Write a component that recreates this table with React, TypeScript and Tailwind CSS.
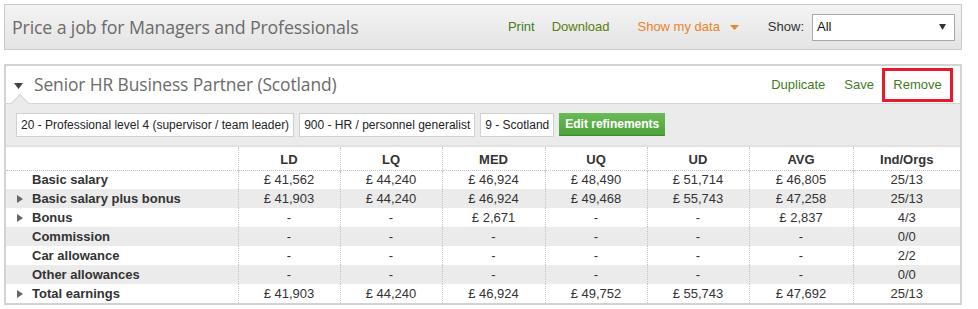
import React from "react";

type Row = {
  label: string;
  expandable: boolean;
  values: string[];
  count: string;
};

const rows: Row[] = [
  { label: "Basic salary", expandable: false, values: ["£ 41,562", "£ 44,240", "£ 46,924", "£ 48,490", "£ 51,714", "£ 46,805"], count: "25/13" },
  { label: "Basic salary plus bonus", expandable: true, values: ["£ 41,903", "£ 44,240", "£ 46,924", "£ 49,468", "£ 55,743", "£ 47,258"], count: "25/13" },
  { label: "Bonus", expandable: true, values: ["-", "-", "£ 2,671", "-", "-", "£ 2,837"], count: "4/3" },
  { label: "Commission", expandable: false, values: ["-", "-", "-", "-", "-", "-"], count: "0/0" },
  { label: "Car allowance", expandable: false, values: ["-", "-", "-", "-", "-", "-"], count: "2/2" },
  { label: "Other allowances", expandable: false, values: ["-", "-", "-", "-", "-", "-"], count: "0/0" },
  { label: "Total earnings", expandable: true, values: ["£ 41,903", "£ 44,240", "£ 46,924", "£ 49,752", "£ 55,743", "£ 47,692"], count: "25/13" },
];

const columns = [
  { name: "LD", width: "w-[102px]" },
  { name: "LQ", width: "w-[102px]" },
  { name: "MED", width: "w-[103px]" },
  { name: "UQ", width: "w-[102px]" },
  { name: "UD", width: "w-[102px]" },
  { name: "AVG", width: "w-[104px]" },
];

const refinements = [
  "20 - Professional level 4 (supervisor / team leader)",
  "900 - HR / personnel generalist",
  "9 - Scotland",
];

const RowArrow = () => (
  <svg width="6" height="8" viewBox="0 0 6 8" className="inline-block">
    <path d="M0 0 L6 4 L0 8 Z" fill="#666" />
  </svg>
);

export default function App() {
  return (
    <div className="w-[978px] h-[309px] bg-white pt-1 pl-1 font-['Liberation_Sans',Arial,sans-serif] text-[13px] text-[#333]">
      {/* Page header */}
      <div className="w-[958px] h-[46px] border border-[#c9c9c9] bg-gradient-to-b from-[#f3f3f3] to-[#e4e4e4] flex items-center pl-[7px] pr-[6px]">
        <h1 className="font-['Open_Sans',sans-serif] text-[17.8px] text-[#6b6b6b] tracking-[-0.15px] flex-1">
          Price a job for Managers and Professionals
        </h1>
        <a className="text-[#3f7d1f] mr-[17px]">Print</a>
        <a className="text-[#5a7d12] mr-[28px]">Download</a>
        <a className="text-[#e8842c] flex items-center mr-[29px]">
          Show my data
          <svg width="9" height="6" viewBox="0 0 9 6" className="ml-[10px] mt-[1px]">
            <path d="M0 0 H9 L4.5 5 Z" fill="#e8842c" />
          </svg>
        </a>
        <span className="text-[#333] mr-[8px]">Show:</span>
        <div className="w-[143px] h-[27px] bg-white border border-[#a9a9a9] flex items-center justify-between pl-[4px] pr-[8px]">
          <span className="text-[#111]">All</span>
          <svg width="7" height="6" viewBox="0 0 7 6">
            <path d="M0 0 H7 L3.5 6 Z" fill="#333" />
          </svg>
        </div>
      </div>

      {/* Job panel */}
      <div className="w-[958px] mt-[14px] border-2 border-[#d3d3d3]">
        <div className="relative h-[38px] bg-white border-b border-[#d6d6d6] flex items-center pl-[8px] pr-[7px]">
          <svg width="9" height="6" viewBox="0 0 9 6" className="mr-[11px] mt-[2px]">
            <path d="M0 0 H9 L4.5 6 Z" fill="#444" />
          </svg>
          <h2 className="font-['Open_Sans',sans-serif] text-[17.4px] text-[#6b6b6b] tracking-[-0.1px] flex-1">
            Senior HR Business Partner (Scotland)
          </h2>
          <a className="text-[#3f7d1f] mr-[19px]">Duplicate</a>
          <a className="text-[#3f7d1f] mr-[8px]">Save</a>
          <a className="h-[34px] w-[71px] border-[3px] border-[#e8192c] text-[#3f7d1f] flex items-center justify-center">
            Remove
          </a>
          <div className="absolute left-[7px] bottom-[-8px] w-[14px] h-[14px] rotate-45 bg-[#ebebeb] border-t border-l border-[#d6d6d6]" />
        </div>

        {/* Refinements */}
        <div className="bg-[#ebebeb] h-[43px] pl-[10px] flex items-center gap-[5px] text-[12px] border-b-2 border-[#e2e2e2]">
          {refinements.map((r) => (
            <span key={r} className="h-[24px] bg-white border border-[#d0d0d0] px-[4px] flex items-center text-[#222]">
              {r}
            </span>
          ))}
          <button className="h-[23px] px-[6px] bg-gradient-to-b from-[#6abb57] to-[#4ea23b] text-white font-bold border-b border-[#3f8a2e]">
            Edit refinements
          </button>
        </div>

        {/* Results table */}
        <table className="w-[954px] border-collapse table-fixed leading-[16px]">
          <thead>
            <tr className="h-[23px] border-b border-dotted border-[#c4c4c4]">
              <th className="w-[232px]" />
              {columns.map((c) => (
                <th key={c.name} className={`${c.width} pt-[4px] border-l border-dotted border-[#c4c4c4] font-bold text-center`}>
                  {c.name}
                </th>
              ))}
              <th className="pt-[4px] border-l border-dotted border-[#c4c4c4] font-bold text-center">Ind/Orgs</th>
            </tr>
          </thead>
          <tbody>
            {rows.map((row, i) => (
              <tr key={row.label} className={`h-[19px] ${i % 2 === 1 ? "bg-[#ebebeb]" : "bg-white"}`}>
                <td className="font-bold whitespace-nowrap">
                  <span className="inline-block w-[26px] pl-[11px]">{row.expandable && <RowArrow />}</span>
                  {row.label}
                </td>
                {row.values.map((v, j) => (
                  <td key={j} className="border-l border-dotted border-[#c4c4c4] text-center">
                    {v}
                  </td>
                ))}
                <td className="border-l border-dotted border-[#c4c4c4] text-center">{row.count}</td>
              </tr>
            ))}
          </tbody>
        </table>
      </div>
    </div>
  );
}
